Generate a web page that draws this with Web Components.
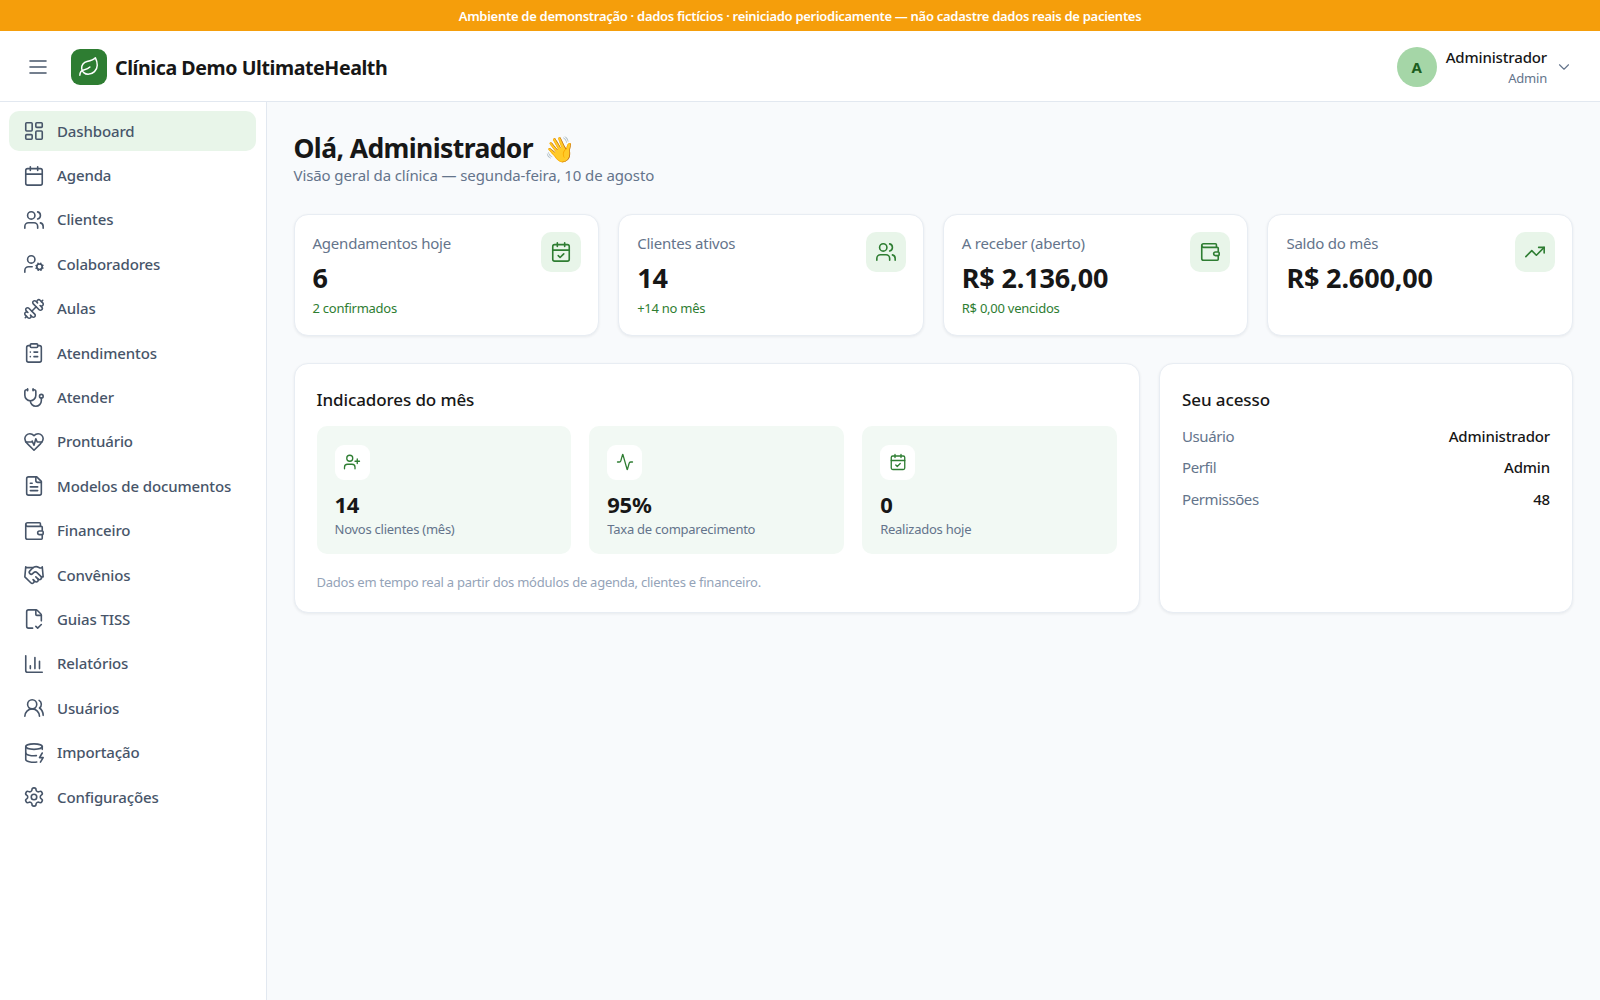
<!DOCTYPE html>
<html lang="pt-BR">
<head>
<meta charset="utf-8">
<title>Clínica Demo UltimateHealth</title>
<style>
  html, body { margin: 0; height: 100%; }
  body { font-family: "Noto Sans", "Open Sans", sans-serif; color: #171717; background: #f8fafc; }
</style>
</head>
<body>
<app-shell></app-shell>
<script>
const ICONS = {
  menu: '<path d="M4 6h16M4 12h16M4 18h16"/>',
  leaf: '<path d="M11 20A7 7 0 0 1 9.8 6.1C15.5 5 17 4.48 19 2c1 2 2 4.18 2 8 0 5.5-4.78 10-10 10Z"/><path d="M2 21c0-3 1.85-5.36 5.08-6C9.5 14.52 12 13 13 12"/>',
  chevron: '<path d="m6 9 6 6 6-6"/>',
  dashboard: '<rect x="3" y="3" width="7" height="9" rx="1"/><rect x="14" y="3" width="7" height="5" rx="1"/><rect x="14" y="12" width="7" height="9" rx="1"/><rect x="3" y="16" width="7" height="5" rx="1"/>',
  calendar: '<path d="M8 2v4M16 2v4"/><rect x="3" y="4" width="18" height="18" rx="2"/><path d="M3 10h18"/>',
  calendarCheck: '<path d="M8 2v4M16 2v4"/><rect x="3" y="4" width="18" height="18" rx="2"/><path d="M3 10h18"/><path d="m9 16 2 2 4-4"/>',
  users: '<path d="M16 21v-2a4 4 0 0 0-4-4H6a4 4 0 0 0-4 4v2"/><circle cx="9" cy="7" r="4"/><path d="M22 21v-2a4 4 0 0 0-3-3.87"/><path d="M16 3.13a4 4 0 0 1 0 7.75"/>',
  userCog: '<circle cx="18" cy="15" r="3"/><circle cx="9" cy="7" r="4"/><path d="M10 15H6a4 4 0 0 0-4 4v2"/><path d="m21.7 16.4-.9-.3"/><path d="m15.2 13.9-.9-.3"/><path d="m16.6 18.7.3-.9"/><path d="m19.1 12.2.3-.9"/><path d="m19.6 18.7-.4-1"/><path d="m16.8 12.3-.4-1"/><path d="m14.3 16.6 1-.4"/><path d="m20.7 13.8 1-.4"/>',
  dumbbell: '<g transform="translate(24 0) scale(-1 1)"><path d="M14.4 14.4 9.6 9.6"/><path d="M18.657 21.485a2 2 0 1 1-2.829-2.828l-1.767 1.768a2 2 0 1 1-2.829-2.829l6.364-6.364a2 2 0 1 1 2.829 2.829l-1.768 1.767a2 2 0 1 1 2.828 2.829z"/><path d="m21.5 21.5-1.4-1.4"/><path d="M3.9 3.9 2.5 2.5"/><path d="M6.404 12.768a2 2 0 1 1-2.829-2.829l1.768-1.767a2 2 0 1 1-2.828-2.829l2.828-2.828a2 2 0 1 1 2.829 2.828l1.767-1.768a2 2 0 1 1 2.829 2.829z"/></g>',
  clipboard: '<rect x="8" y="2" width="8" height="4" rx="1"/><path d="M16 4h2a2 2 0 0 1 2 2v14a2 2 0 0 1-2 2H6a2 2 0 0 1-2-2V6a2 2 0 0 1 2-2h2"/><path d="M12 11h4M12 16h4M8 11h.01M8 16h.01"/>',
  stethoscope: '<path d="M11 2v2M5 2v2"/><path d="M5 3H4a2 2 0 0 0-2 2v4a6 6 0 0 0 12 0V5a2 2 0 0 0-2-2h-1"/><path d="M8 15a6 6 0 0 0 12 0v-3"/><circle cx="20" cy="10" r="2"/>',
  heartPulse: '<path d="M19 14c1.49-1.46 3-3.21 3-5.5A5.5 5.5 0 0 0 16.5 3c-1.76 0-3 .5-4.5 2-1.5-1.5-2.74-2-4.5-2A5.5 5.5 0 0 0 2 8.5c0 2.3 1.5 4.05 3 5.5l7 7Z"/><path d="M3.22 12H9.5l.5-1 2 4.5 2-7 1.5 3.5h5.27"/>',
  fileText: '<path d="M15 2H6a2 2 0 0 0-2 2v16a2 2 0 0 0 2 2h12a2 2 0 0 0 2-2V7Z"/><path d="M14 2v4a2 2 0 0 0 2 2h4"/><path d="M10 9H8M16 13H8M16 17H8"/>',
  wallet: '<path d="M19 7V4a1 1 0 0 0-1-1H5a2 2 0 0 0 0 4h15a1 1 0 0 1 1 1v4h-3a2 2 0 0 0 0 4h3a1 1 0 0 0 1-1v-2a1 1 0 0 0-1-1"/><path d="M3 5v14a2 2 0 0 0 2 2h15a1 1 0 0 0 1-1v-4"/>',
  handshake: '<path d="m11 17 2 2a1 1 0 1 0 3-3"/><path d="m14 14 2.5 2.5a1 1 0 1 0 3-3l-3.88-3.88a3 3 0 0 0-4.24 0l-.88.88a1 1 0 1 1-3-3l2.81-2.81a5.79 5.79 0 0 1 7.06-.87l.47.28a2 2 0 0 0 1.42.25L21 4"/><path d="m21 3 1 11h-2"/><path d="M3 3 2 14l6.5 6.5a1 1 0 1 0 3-3"/><path d="M3 4h8"/>',
  fileCheck: '<path d="M10.5 22H6a2 2 0 0 1-2-2V4a2 2 0 0 1 2-2h8a2.4 2.4 0 0 1 1.706.706l3.588 3.588A2.4 2.4 0 0 1 20 8v6"/><path d="M14 2v5a1 1 0 0 0 1 1h5"/><path d="m14 20 2 2 4-4"/>',
  chart: '<path d="M3 3v16a2 2 0 0 0 2 2h16"/><path d="M18 17V9M13 17V5M8 17v-3"/>',
  usersRound: '<path d="M18 21a8 8 0 0 0-16 0"/><circle cx="10" cy="8" r="5"/><path d="M22 20c0-3.37-2-6.5-4-8a5 5 0 0 0-.45-8.3"/>',
  databaseZap: '<ellipse cx="12" cy="5" rx="9" ry="3"/><path d="M3 5V19A9 3 0 0 0 15 21.84"/><path d="M21 5V8"/><path d="M21 12L18 17H22L19 22"/><path d="M3 12A9 3 0 0 0 14.59 14.87"/>',
  settings: '<path d="M12.22 2h-.44a2 2 0 0 0-2 2v.18a2 2 0 0 1-1 1.73l-.43.25a2 2 0 0 1-2 0l-.15-.08a2 2 0 0 0-2.73.73l-.22.38a2 2 0 0 0 .73 2.73l.15.1a2 2 0 0 1 1 1.72v.51a2 2 0 0 1-1 1.74l-.15.09a2 2 0 0 0-.73 2.73l.22.38a2 2 0 0 0 2.73.73l.15-.08a2 2 0 0 1 2 0l.43.25a2 2 0 0 1 1 1.73V20a2 2 0 0 0 2 2h.44a2 2 0 0 0 2-2v-.18a2 2 0 0 1 1-1.73l.43-.25a2 2 0 0 1 2 0l.15.08a2 2 0 0 0 2.73-.73l.22-.39a2 2 0 0 0-.73-2.73l-.15-.08a2 2 0 0 1-1-1.74v-.5a2 2 0 0 1 1-1.74l.15-.09a2 2 0 0 0 .73-2.73l-.22-.38a2 2 0 0 0-2.73-.73l-.15.08a2 2 0 0 1-2 0l-.43-.25a2 2 0 0 1-1-1.73V4a2 2 0 0 0-2-2z"/><circle cx="12" cy="12" r="3"/>',
  trending: '<path d="M22 7 13.5 15.5 8.5 10.5 2 17"/><path d="M16 7h6v6"/>',
  userPlus: '<path d="M16 21v-2a4 4 0 0 0-4-4H6a4 4 0 0 0-4 4v2"/><circle cx="9" cy="7" r="4"/><path d="M19 8v6M22 11h-6"/>',
  activity: '<path d="M22 12h-2.48a2 2 0 0 0-1.93 1.46l-2.35 8.36a.25.25 0 0 1-.48 0L9.24 2.18a.25.25 0 0 0-.48 0l-2.35 8.36A2 2 0 0 1 4.49 12H2"/>'
};

class UiIcon extends HTMLElement {
  connectedCallback() {
    const size = this.getAttribute("size") || 24;
    const stroke = this.getAttribute("stroke") || 1.75;
    this.attachShadow({ mode: "open" }).innerHTML = `
      <style>
        :host { display: inline-flex; flex: none; width: ${size}px; height: ${size}px; }
        svg { display: block; }
      </style>
      <svg width="${size}" height="${size}" viewBox="0 0 24 24" fill="none" stroke="currentColor"
        stroke-width="${stroke}" stroke-linecap="round" stroke-linejoin="round">${ICONS[this.getAttribute("name")] || ""}</svg>`;
  }
}

class AppBanner extends HTMLElement {
  constructor() {
    super();
    this.attachShadow({ mode: "open" }).innerHTML = `
      <style>
        :host { display: block; background: #f59e0b; color: #fff; height: 31px; line-height: 32px;
          text-align: center; font-size: 13px; font-weight: 600; letter-spacing: -0.285px; }
      </style>
      <slot></slot>`;
  }
}

class AppHeader extends HTMLElement {
  constructor() {
    super();
    this.attachShadow({ mode: "open" }).innerHTML = `
      <style>
        :host { display: flex; align-items: center; height: 68px; background: #fff; border-bottom: 1px solid #e2e8f0;
          padding: 2px 27px 0 26px; box-sizing: content-box; }
        .menu { color: #475569; display: flex; margin-right: 21px; }
        .logo { width: 36px; height: 36px; border-radius: 9px; background: #2e7d32; color: #fff; display: flex;
          align-items: center; justify-content: center; margin-right: 8px; }
        .title { font-size: 19.6px; font-weight: 700; letter-spacing: -0.43px; color: #171717; flex: 1; }
        .avatar { width: 40px; height: 40px; border-radius: 50%; background: #a5d6a7; color: #1b5e20; font-weight: 700;
          font-size: 15px; display: flex; align-items: center; justify-content: center; margin-right: 9px; }
        .who { text-align: right; margin-right: 8px; padding-top: 1px; }
        .name { font-size: 15px; font-weight: 500; line-height: 20px; letter-spacing: -0.15px; color: #171717; }
        .role { font-size: 13px; line-height: 21px; margin-top: 1px; letter-spacing: -0.2px; color: #64748b; }
        .chev { color: #64748b; display: flex; }
      </style>
      <span class="menu"><ui-icon name="menu" size="24" stroke="1.6"></ui-icon></span>
      <span class="logo"><ui-icon name="leaf" size="22" stroke="1.6"></ui-icon></span>
      <span class="title"><slot name="title"></slot></span>
      <span class="avatar"><slot name="initial"></slot></span>
      <div class="who">
        <div class="name"><slot name="name"></slot></div>
        <div class="role"><slot name="role"></slot></div>
      </div>
      <span class="chev"><ui-icon name="chevron" size="18" stroke="1.5"></ui-icon></span>`;
  }
}

class SideNav extends HTMLElement {
  constructor() {
    super();
    this.attachShadow({ mode: "open" }).innerHTML = `
      <style>
        :host { display: flex; flex-direction: column; gap: 4px; width: 266px; box-sizing: content-box;
          background: #fff; border-right: 1px solid #e2e8f0; padding: 9px 0 0 0; flex: none; }
      </style>
      <slot></slot>`;
  }
}

class NavItem extends HTMLElement {
  constructor() {
    super();
    this.attachShadow({ mode: "open" }).innerHTML = `
      <style>
        :host { display: flex; align-items: center; gap: 13px; height: 40.4px; margin: 0 10px 0 9px; padding: 0 14px;
          border-radius: 10px; color: #475569; font-size: 15px; font-weight: 500; letter-spacing: -0.12px; }
        :host([active]) { background: #e8f5e9; }
        ui-icon { margin-left: -0.5px; }
        .txt { position: relative; top: -0.5px; margin-left: -0.5px; }
      </style>
      <ui-icon size="22" name="${this.getAttribute("icon")}"></ui-icon>
      <span class="txt"><slot></slot></span>`;
  }
}

class StatCard extends HTMLElement {
  constructor() {
    super();
    this.attachShadow({ mode: "open" }).innerHTML = `
      <style>
        :host { display: block; box-sizing: border-box; height: 121.5px; padding: 18px 17px 0 18px;
          background: #fff; border: 1px solid #e8edf3; border-radius: 14px; box-shadow: 0 1px 3px rgba(15,23,42,.07); }
        .top { display: flex; justify-content: space-between; align-items: flex-start; }
        .label { font-size: 15px; line-height: 20px; letter-spacing: -0.22px; color: #64748b; }
        .value { font-size: 27px; font-weight: 700; line-height: 34px; margin-top: 8px; letter-spacing: -0.15px; color: #171717; }
        .hint { font-size: 13px; line-height: 18px; margin-top: 4px; letter-spacing: -0.25px; color: #2e7d32; }
        .icon { width: 40px; height: 40px; margin-top: -1px; border-radius: 10px; background: #e8f5e9; color: #2e7d32; display: flex;
          align-items: center; justify-content: center; flex: none; }
      </style>
      <div class="top">
        <div>
          <div class="label"><slot name="label"></slot></div>
          <div class="value"><slot name="value"></slot></div>
          <div class="hint"><slot name="hint"></slot></div>
        </div>
        <span class="icon"><ui-icon size="22" name="${this.getAttribute("icon")}"></ui-icon></span>
      </div>`;
  }
}

class PanelCard extends HTMLElement {
  constructor() {
    super();
    this.attachShadow({ mode: "open" }).innerHTML = `
      <style>
        :host { display: block; box-sizing: border-box; height: 250.5px; padding: 24px 22px 0;
          background: #fff; border: 1px solid #e8edf3; border-radius: 14px; box-shadow: 0 1px 3px rgba(15,23,42,.07); }
        h2 { margin: 0 0 14px; font-size: 17px; line-height: 24px; font-weight: 500; letter-spacing: -0.1px; color: #171717; }
        :host([compact]) h2 { margin-bottom: 9px; }
      </style>
      <h2><slot name="title"></slot></h2>
      <slot></slot>`;
  }
}

class MiniStat extends HTMLElement {
  constructor() {
    super();
    this.attachShadow({ mode: "open" }).innerHTML = `
      <style>
        :host { display: block; box-sizing: border-box; height: 128px; padding: 19px 18px 0; background: #f2f9f4; border-radius: 10px; }
        .icon { width: 35px; height: 35px; border-radius: 9px; background: #fff; color: #2e7d32; display: flex;
          align-items: center; justify-content: center; }
        .value { font-size: 22px; font-weight: 700; line-height: 28px; margin-top: 10px; letter-spacing: -0.3px; color: #171717; }
        .label { font-size: 13px; line-height: 18px; margin-top: 2px; letter-spacing: -0.25px; color: #64748b; }
      </style>
      <div class="icon"><ui-icon size="18" name="${this.getAttribute("icon")}"></ui-icon></div>
      <div class="value"><slot name="value"></slot></div>
      <div class="label"><slot name="label"></slot></div>`;
  }
}

class InfoRow extends HTMLElement {
  constructor() {
    super();
    this.attachShadow({ mode: "open" }).innerHTML = `
      <style>
        :host { display: flex; justify-content: space-between; height: 31.3px; align-items: center; font-size: 15px; }
        .k { color: #64748b; letter-spacing: -0.4px; }
        .v { color: #171717; font-weight: 500; letter-spacing: -0.15px; }
      </style>
      <span class="k"><slot name="key"></slot></span>
      <span class="v"><slot name="val"></slot></span>`;
  }
}

class DashboardPage extends HTMLElement {
  constructor() {
    super();
    this.attachShadow({ mode: "open" }).innerHTML = `
      <style>
        :host { display: block; flex: 1; min-width: 0; box-sizing: border-box; padding: 28px 27px 0 26.5px; }
        h1 { margin: 0; font-size: 26.5px; line-height: 36px; font-weight: 700; letter-spacing: -0.6px; color: #171717;
          display: flex; align-items: center; gap: 11px; }
        ::slotted([slot="emoji"]) { font-size: 25px; letter-spacing: 0; }
        .sub { font-size: 15px; line-height: 18px; letter-spacing: -0.1px; color: #64748b; margin: 0; }
        .stats { display: grid; grid-template-columns: repeat(4, minmax(0, 1fr)); gap: 19px; margin-top: 30px; }
        .row { display: grid; grid-template-columns: minmax(0, 1fr) 414px; gap: 19px; margin-top: 27px; }
      </style>
      <h1><span><slot name="greeting"></slot></span><slot name="emoji"></slot></h1>
      <p class="sub"><slot name="sub"></slot></p>
      <div class="stats"><slot name="stats"></slot></div>
      <div class="row"><slot name="panels"></slot></div>`;
  }
}

class MiniGrid extends HTMLElement {
  constructor() {
    super();
    this.attachShadow({ mode: "open" }).innerHTML = `
      <style>
        :host { display: grid; grid-template-columns: repeat(3, minmax(0, 1fr)); gap: 18px; }
      </style>
      <slot></slot>`;
  }
}

class NoteLine extends HTMLElement {
  constructor() {
    super();
    this.attachShadow({ mode: "open" }).innerHTML = `
      <style>
        :host { display: block; font-size: 13px; line-height: 18px; letter-spacing: -0.24px; color: #94a3b8; margin-top: 19px; }
      </style>
      <slot></slot>`;
  }
}

class AppShell extends HTMLElement {
  constructor() {
    super();
    const navItems = [
      ["dashboard", "Dashboard"], ["calendar", "Agenda"], ["users", "Clientes"], ["userCog", "Colaboradores"],
      ["dumbbell", "Aulas"], ["clipboard", "Atendimentos"], ["stethoscope", "Atender"], ["heartPulse", "Prontuário"],
      ["fileText", "Modelos de documentos"], ["wallet", "Financeiro"], ["handshake", "Convênios"], ["fileCheck", "Guias TISS"],
      ["chart", "Relatórios"], ["usersRound", "Usuários"], ["databaseZap", "Importação"], ["settings", "Configurações"]
    ];
    this.attachShadow({ mode: "open" }).innerHTML = `
      <style>
        :host { display: flex; flex-direction: column; height: 100vh; overflow: hidden; }
        .body { display: flex; flex: 1; min-height: 0; }
      </style>
      <app-banner>Ambiente de demonstração · dados fictícios · reiniciado periodicamente — não cadastre dados reais de pacientes</app-banner>
      <app-header>
        <span slot="title">Clínica Demo UltimateHealth</span>
        <span slot="initial">A</span>
        <span slot="name">Administrador</span>
        <span slot="role">Admin</span>
      </app-header>
      <div class="body">
        <side-nav>
          ${navItems.map(([icon, text], i) => `<nav-item icon="${icon}"${i === 0 ? " active" : ""}>${text}</nav-item>`).join("")}
        </side-nav>
        <dashboard-page>
          <span slot="greeting">Olá, Administrador</span>
          <span slot="emoji">👋</span>
          <span slot="sub">Visão geral da clínica — segunda-feira, 10 de agosto</span>
          <stat-card slot="stats" icon="calendarCheck">
            <span slot="label">Agendamentos hoje</span><span slot="value">6</span><span slot="hint">2 confirmados</span>
          </stat-card>
          <stat-card slot="stats" icon="users">
            <span slot="label">Clientes ativos</span><span slot="value">14</span><span slot="hint">+14 no mês</span>
          </stat-card>
          <stat-card slot="stats" icon="wallet">
            <span slot="label">A receber (aberto)</span><span slot="value">R$ 2.136,00</span><span slot="hint">R$ 0,00 vencidos</span>
          </stat-card>
          <stat-card slot="stats" icon="trending">
            <span slot="label">Saldo do mês</span><span slot="value">R$ 2.600,00</span>
          </stat-card>
          <panel-card slot="panels">
            <span slot="title">Indicadores do mês</span>
            <mini-grid>
              <mini-stat icon="userPlus"><span slot="value">14</span><span slot="label">Novos clientes (mês)</span></mini-stat>
              <mini-stat icon="activity"><span slot="value">95%</span><span slot="label">Taxa de comparecimento</span></mini-stat>
              <mini-stat icon="calendarCheck"><span slot="value">0</span><span slot="label">Realizados hoje</span></mini-stat>
            </mini-grid>
            <note-line>Dados em tempo real a partir dos módulos de agenda, clientes e financeiro.</note-line>
          </panel-card>
          <panel-card slot="panels" compact>
            <span slot="title">Seu acesso</span>
            <info-row><span slot="key">Usuário</span><span slot="val">Administrador</span></info-row>
            <info-row><span slot="key">Perfil</span><span slot="val">Admin</span></info-row>
            <info-row><span slot="key">Permissões</span><span slot="val">48</span></info-row>
          </panel-card>
        </dashboard-page>
      </div>`;
  }
}

customElements.define("ui-icon", UiIcon);
customElements.define("app-banner", AppBanner);
customElements.define("app-header", AppHeader);
customElements.define("side-nav", SideNav);
customElements.define("nav-item", NavItem);
customElements.define("stat-card", StatCard);
customElements.define("panel-card", PanelCard);
customElements.define("mini-stat", MiniStat);
customElements.define("mini-grid", MiniGrid);
customElements.define("info-row", InfoRow);
customElements.define("note-line", NoteLine);
customElements.define("dashboard-page", DashboardPage);
customElements.define("app-shell", AppShell);
</script>
</body>
</html>
